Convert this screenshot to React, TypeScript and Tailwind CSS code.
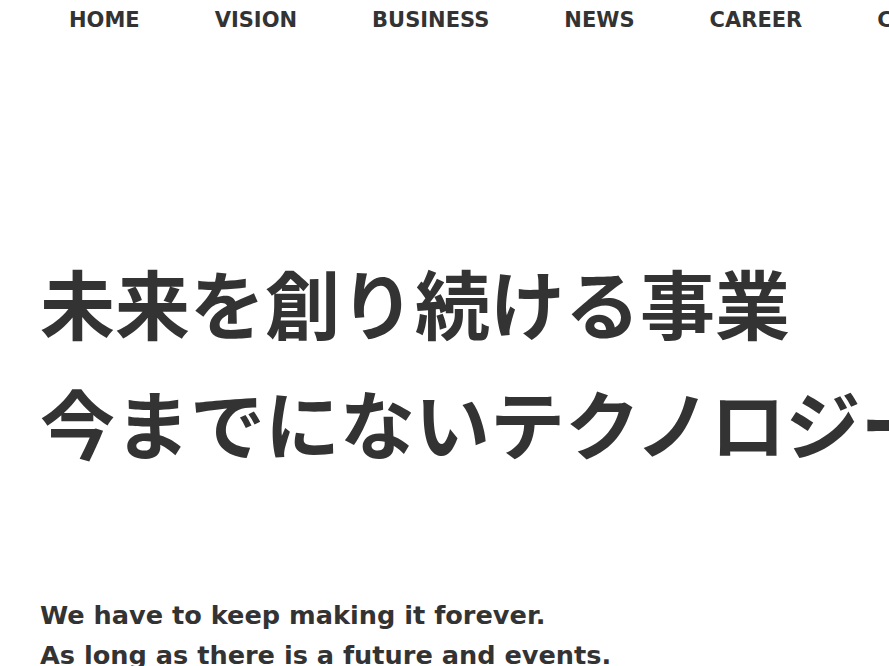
import React from "react";

const navItems = ["HOME", "VISION", "BUSINESS", "NEWS", "CAREER", "CONTACT"];

export default function App() {
  return (
    <div className="w-[889px] h-[666px] overflow-hidden bg-white text-[#333]">
      {/* Header nav */}
      <nav className="h-[40px] flex items-center pl-[69px] gap-[75px] whitespace-nowrap font-['DejaVu_Sans',sans-serif] font-bold text-[21px] leading-none text-[#333]">
        {navItems.map((item) => (
          <a key={item} href="#" className="block">
            {item}
          </a>
        ))}
      </nav>

      {/* Hero */}
      <section className="pl-[40px] pt-[202px]">
        <h1 className="whitespace-nowrap font-['Noto_Sans_CJK_JP',sans-serif] font-bold text-[75px] leading-[120px] tracking-normal">
          未来を創り続ける事業
          <br />
          今までにないテクノロジー
        </h1>
        <p className="mt-[113px] whitespace-nowrap font-['DejaVu_Sans',sans-serif] font-bold text-[25.6px] leading-[40px] text-[#333]">
          We have to keep making it forever.
          <br />
          As long as there is a future and events.
        </p>
      </section>
    </div>
  );
}
